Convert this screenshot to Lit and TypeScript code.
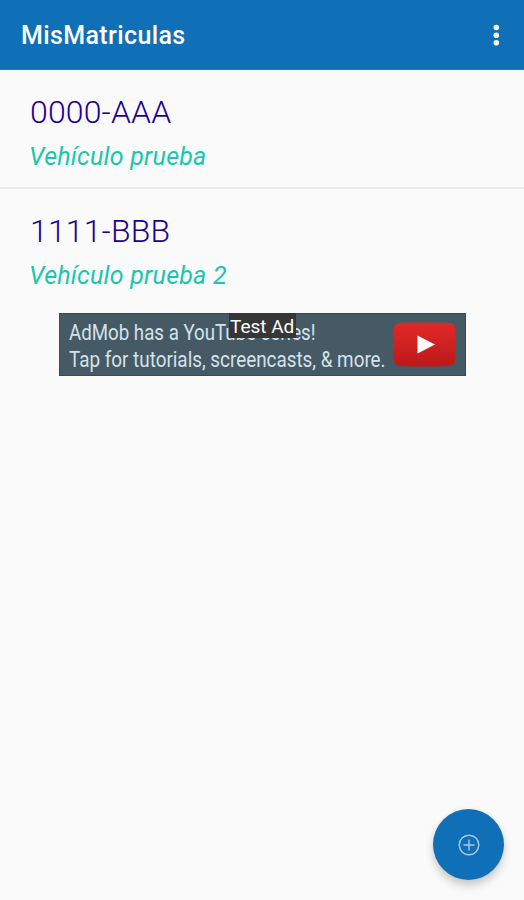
import { LitElement, html, css } from "lit";
import { customElement, property } from "lit/decorators.js";

@customElement("app-toolbar")
class AppToolbar extends LitElement {
  static styles = css`
    :host {
      display: flex;
      box-sizing: border-box;
      height: 70px;
      padding: 0 22px 0 21px;
      align-items: center;
      justify-content: space-between;
      background: #0f70b7;
      border-bottom: 1px solid #2b74ad;
      color: #fff;
    }
    .title {
      font-size: 25px;
      line-height: 30px;
      font-weight: 500;
      letter-spacing: 0.38px;
      margin-top: 3px;
    }
    .more {
      display: block;
      width: 12px;
      height: 24px;
      fill: #fff;
    }
  `;
  render() {
    return html`
      <span class="title">MisMatriculas</span>
      <svg class="more" viewBox="0 0 12 24">
        <circle cx="6.3" cy="4.5" r="2.8" />
        <circle cx="6.3" cy="12.2" r="2.8" />
        <circle cx="6.3" cy="19.8" r="2.8" />
      </svg>
    `;
  }
}

@customElement("plate-item")
class PlateItem extends LitElement {
  @property() plate = "";
  @property() description = "";
  static styles = css`
    :host {
      display: block;
      box-sizing: border-box;
      height: 119px;
      padding: 22px 29px 0;
    }
    .plate {
      padding-left: 1px;
      font-size: 32px;
      line-height: 40px;
      font-weight: 350;
      letter-spacing: 0.15px;
      color: #1f0091;
    }
    .description {
      margin-top: 10px;
      font-size: 25px;
      line-height: 30px;
      font-style: italic;
      letter-spacing: 0.24px;
      color: #1ac6b0;
    }
  `;
  render() {
    return html`
      <div class="plate">${this.plate}</div>
      <div class="description">${this.description}</div>
    `;
  }
}

@customElement("ad-banner")
class AdBanner extends LitElement {
  static styles = css`
    :host {
      display: flex;
      position: relative;
      box-sizing: border-box;
      width: 407px;
      height: 63px;
      padding: 5px 9px 0;
      justify-content: space-between;
      background: #455a64;
      border: 1px solid #344c57;
      color: #d3e2eb;
    }
    .copy {
      width: 320px;
      font-size: 22px;
      line-height: 27px;
      white-space: nowrap;
    }
    .line {
      display: block;
      width: max-content;
      transform-origin: 0 50%;
      transform: scaleX(0.85);
    }
    .line + .line {
      transform: scaleX(0.857);
    }
    .label {
      position: absolute;
      left: 169px;
      top: -1px;
      width: 67px;
      height: 25px;
      box-sizing: border-box;
      padding-left: 1px;
      background: #363636;
      color: #fff;
      font-size: 19px;
      line-height: 28px;
      white-space: nowrap;
    }
    .video {
      display: block;
      flex: none;
      margin-top: 3px;
      width: 63px;
      height: 45px;
    }
  `;
  render() {
    return html`
      <div class="copy">
        <span class="line">AdMob has a YouTube series!</span>
        <span class="line">Tap for tutorials, screencasts, &amp; more.</span>
      </div>
      <svg class="video" viewBox="0 0 63 45">
        <defs>
          <linearGradient id="red" x1="0" y1="0" x2="0" y2="1">
            <stop offset="0" stop-color="#e02a27" />
            <stop offset="1" stop-color="#bd181b" />
          </linearGradient>
        </defs>
        <path
          fill="url(#red)"
          d="M8 .8Q31.500 0 55 .8Q62 1 62.500 8Q63 22 62.500 37Q62 43.500 55 44Q31.500 45 8 44Q1 43.500 .5 37Q0 22 .5 8Q1 1 8 .8Z"
        />
        <path fill="#fff" d="M24.500 13.500L42 22.500L24.500 31.500Z" />
      </svg>
      <div class="label">Test Ad</div>
    `;
  }
}

@customElement("app-root")
class AppRoot extends LitElement {
  static styles = css`
    :host {
      display: block;
      position: relative;
      height: 900px;
      overflow: hidden;
      background: #fafafa;
      font-family: Roboto, sans-serif;
    }
    .divider {
      height: 2px;
      margin-top: -2px;
      background: #e9e9e9;
    }
    .ad {
      margin: 5px 0 0 59px;
    }
    .add {
      position: absolute;
      right: 20px;
      bottom: 20px;
      width: 71px;
      height: 71px;
      padding: 0;
      border: 0;
      border-radius: 50%;
      display: grid;
      place-items: center;
      background: #0f70b7;
      box-shadow: 0 6px 9px rgba(0, 0, 0, 0.18), 0 0 5px rgba(0, 0, 0, 0.06);
    }
    .plus {
      width: 24px;
      height: 24px;
      fill: none;
      stroke: #a9cae6;
      stroke-width: 1.4;
    }
  `;
  private vehicles = [
    { plate: "0000-AAA", description: "Vehículo prueba" },
    { plate: "1111-BBB", description: "Vehículo prueba 2" },
  ];
  render() {
    return html`
      <app-toolbar></app-toolbar>
      ${this.vehicles.map(
        (v, i) => html`
          ${i ? html`<div class="divider"></div>` : ""}
          <plate-item .plate=${v.plate} .description=${v.description}></plate-item>
        `
      )}
      <ad-banner class="ad"></ad-banner>
      <button class="add" aria-label="Añadir">
        <svg class="plus" viewBox="0 0 24 24">
          <circle cx="12" cy="12" r="9.8" />
          <path d="M12 6.500V17.500M6.500 12H17.500" />
        </svg>
      </button>
    `;
  }
}
